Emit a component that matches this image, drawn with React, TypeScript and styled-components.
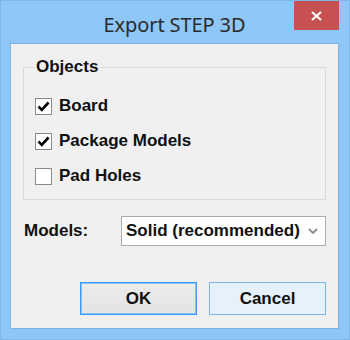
import React from 'react'
import styled, { createGlobalStyle } from 'styled-components'

const GlobalStyle = createGlobalStyle`
  html, body {
    margin: 0;
    padding: 0;
    background: #8ec6f6;
  }
`

const Window = styled.div`
  width: 350px;
  height: 340px;
  box-sizing: border-box;
  background: #8ec6f6;
  border: 1px solid #7fb6e6;
  display: flex;
  flex-direction: column;
  padding: 0 10px 10px 9px;
`

const TitleBar = styled.div`
  height: 42px;
  display: grid;
  grid-template-columns: 1fr auto 1fr;
  align-items: start;
`

const Title = styled.div`
  grid-column: 2;
  padding-top: 10px;
  font-family: 'Noto Sans', 'Open Sans', sans-serif;
  font-size: 20px;
  color: #2a2a2a;
  letter-spacing: -0.1px;
`

const CloseButton = styled.div`
  grid-column: 3;
  justify-self: end;
  width: 45px;
  height: 29px;
  background: #c75050;
  display: flex;
  align-items: center;
  justify-content: center;
`

const Client = styled.div`
  flex: 1;
  background: #f0f0f0;
  border: 1px solid #7db3e2;
  display: flex;
  flex-direction: column;
  padding: 13px 12px 13px 12px;
  font-family: 'Liberation Sans', Arial, sans-serif;
  font-weight: bold;
  font-size: 17px;
  color: #111;
`

const GroupBox = styled.fieldset`
  margin: 0;
  padding: 19px 0 8px 11px;
  height: 143px;
  box-sizing: border-box;
  border: 1px solid #dadada;
  display: flex;
  flex-direction: column;
  gap: 15px;
`

const Legend = styled.legend`
  padding: 0 1px;
  margin-left: 0;
  line-height: 20px;
`

const CheckRow = styled.label`
  display: flex;
  align-items: center;
  gap: 7px;
  height: 20px;
`

const Box = styled.span`
  width: 15px;
  height: 15px;
  border: 1px solid #8a8a8a;
  background: #fff;
  display: flex;
  align-items: center;
  justify-content: center;
`

const FieldRow = styled.div`
  display: flex;
  align-items: center;
  margin-top: 16px;
  padding-left: 1px;
`

const FieldLabel = styled.span`
  width: 97px;
`

const Select = styled.div`
  flex: 1;
  height: 30px;
  box-sizing: border-box;
  border: 1px solid #acacac;
  background: #fff;
  display: flex;
  align-items: center;
  justify-content: space-between;
  padding: 0 7px 0 4px;
`

const ButtonRow = styled.div`
  display: flex;
  justify-content: flex-end;
  gap: 12px;
  margin-top: auto;
`

const Button = styled.div<{ $default?: boolean }>`
  width: 117px;
  height: 33px;
  box-sizing: border-box;
  display: flex;
  align-items: center;
  justify-content: center;
  border: 1px solid ${p => (p.$default ? '#3399ff' : '#7eb4ea')};
  box-shadow: ${p => (p.$default ? 'inset 0 0 0 1px #8cc2f7' : 'none')};
  background: ${p => (p.$default ? 'linear-gradient(#ececec, #e3e3e3)' : '#e5f1fb')};
`

const Check = () => (
  <svg width="13" height="11" viewBox="0 0 13 11">
    <path d="M1.5 5.5 L4.8 8.8 L11.5 1.5" fill="none" stroke="#000" strokeWidth="2.6" />
  </svg>
)

const CheckItem = ({ label, checked }: { label: string; checked?: boolean }) => (
  <CheckRow>
    <Box>{checked && <Check />}</Box>
    {label}
  </CheckRow>
)

export default function App() {
  return (
    <>
      <GlobalStyle />
      <Window>
        <TitleBar>
          <Title>Export STEP 3D</Title>
          <CloseButton>
            <svg width="11" height="10" viewBox="0 0 11 10">
              <path d="M1 1 L10 9 M10 1 L1 9" stroke="#fff" strokeWidth="2.2" />
            </svg>
          </CloseButton>
        </TitleBar>
        <Client>
          <GroupBox>
            <Legend>Objects</Legend>
            <CheckItem label="Board" checked />
            <CheckItem label="Package Models" checked />
            <CheckItem label="Pad Holes" />
          </GroupBox>
          <FieldRow>
            <FieldLabel>Models:</FieldLabel>
            <Select>
              <span>Solid (recommended)</span>
              <svg width="10" height="6" viewBox="0 0 10 6">
                <path d="M1 1 L5 5 L9 1" fill="none" stroke="#8a8a8a" strokeWidth="1.8" />
              </svg>
            </Select>
          </FieldRow>
          <ButtonRow>
            <Button $default>OK</Button>
            <Button>Cancel</Button>
          </ButtonRow>
        </Client>
      </Window>
    </>
  )
}
